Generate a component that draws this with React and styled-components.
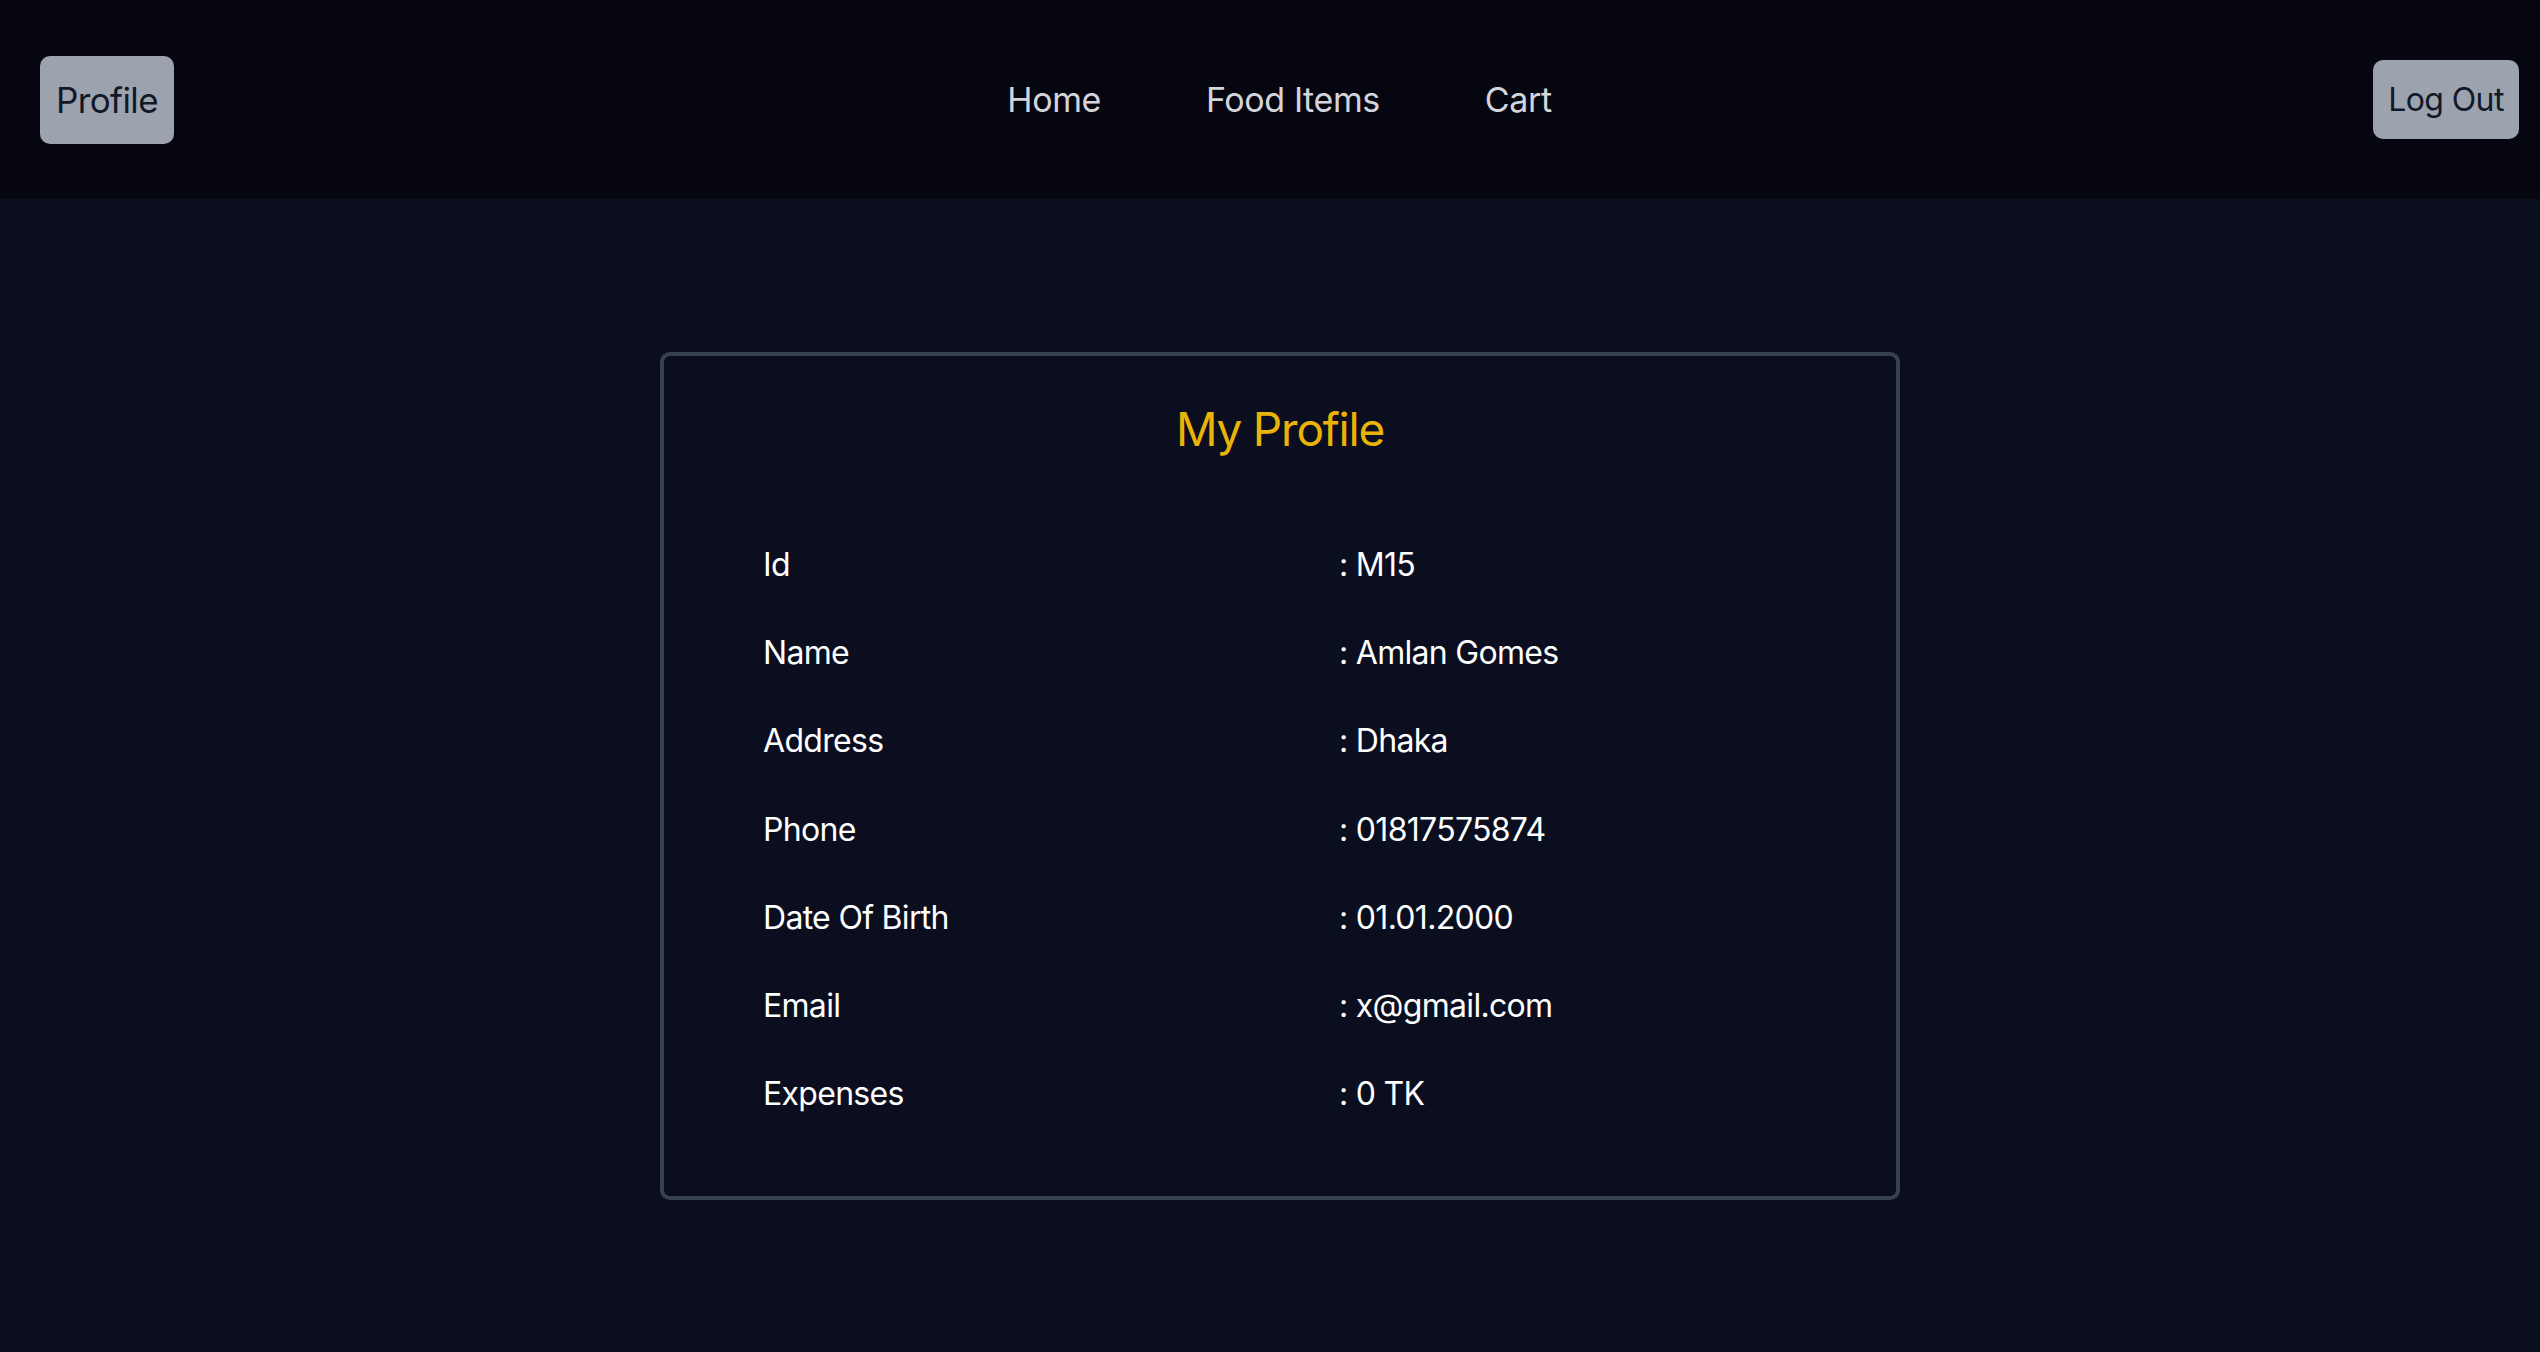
import React from "react";
import styled, { createGlobalStyle } from "styled-components";

const GlobalStyle = createGlobalStyle`
	* {
		box-sizing: border-box;
	}
	html,
	body {
		margin: 0;
		padding: 0;
		background: #0a0e1f;
		font-family: Inter, "Noto Sans", sans-serif;
	}
`;

const profile = [
	["Id", "M15"],
	["Name", "Amlan Gomes"],
	["Address", "Dhaka"],
	["Phone", "01817575874"],
	["Date Of Birth", "01.01.2000"],
	["Email", "x@gmail.com"],
	["Expenses", "0 TK"],
];

export default function App() {
	return (
		<Page>
			<GlobalStyle />
			<Header>
				<Left>
					<NavButton $size={35} $h={88} $w={134}>
						Profile
					</NavButton>
				</Left>
				<Nav>
					<NavLink href="#">Home</NavLink>
					<NavLink href="#">Food Items</NavLink>
					<NavLink href="#">Cart</NavLink>
				</Nav>
				<Right>
					<NavButton $size={32} $h={79} $w={146}>
						Log Out
					</NavButton>
				</Right>
			</Header>
			<Main>
				<Card>
					<Title>My Profile</Title>
					<Details>
						{profile.map(([label, value]) => (
							<Row key={label}>
								<Label>{label}</Label>
								<Value>: {value}</Value>
							</Row>
						))}
					</Details>
				</Card>
			</Main>
		</Page>
	);
}

const Page = styled.div`
	min-height: 1352px;
	background: #0a0e1f;
`;

const Header = styled.header`
	height: 199px;
	background: #05060f;
	display: grid;
	grid-template-columns: 1fr auto 1fr;
	align-items: center;
	padding: 0 21px 0 40px;
`;

const Left = styled.div`
	display: flex;
	justify-content: flex-start;
`;

const Right = styled.div`
	display: flex;
	justify-content: flex-end;
`;

const NavButton = styled.button`
	width: ${(p) => p.$w}px;
	height: ${(p) => p.$h}px;
	border: none;
	border-radius: 10px;
	background: #9ca3af;
	color: #111827;
	font-family: Inter, "Noto Sans", sans-serif;
	font-size: ${(p) => p.$size}px;
	letter-spacing: -0.6px;
	padding: 0;
	display: flex;
	align-items: center;
	justify-content: center;
	cursor: pointer;
`;

const Nav = styled.nav`
	display: flex;
	align-items: center;
	gap: 105px;
`;

const NavLink = styled.a`
	color: #d4d5dc;
	text-decoration: none;
	font-size: 34px;
	letter-spacing: -0.4px;
`;

const Main = styled.main`
	display: flex;
	justify-content: center;
	padding: 153px 0 0 20px;
`;

const Card = styled.section`
	width: 1240px;
	height: 848px;
	border: 4px solid #374151;
	border-radius: 10px;
	padding: 44px 99px 0;
	display: flex;
	flex-direction: column;
`;

const Title = styled.h2`
	margin: 0;
	text-align: center;
	color: #eab308;
	font-size: 46px;
	font-weight: 400;
	line-height: 58px;
	letter-spacing: -1.2px;
`;

const Details = styled.div`
	margin-top: 62px;
	display: flex;
	flex-direction: column;
`;

const Row = styled.div`
	display: grid;
	grid-template-columns: 576px 1fr;
	align-items: center;
	height: 88.3px;
	color: #ffffff;
	font-size: 32px;
	letter-spacing: -0.7px;
`;

const Label = styled.span``;

const Value = styled.span``;
